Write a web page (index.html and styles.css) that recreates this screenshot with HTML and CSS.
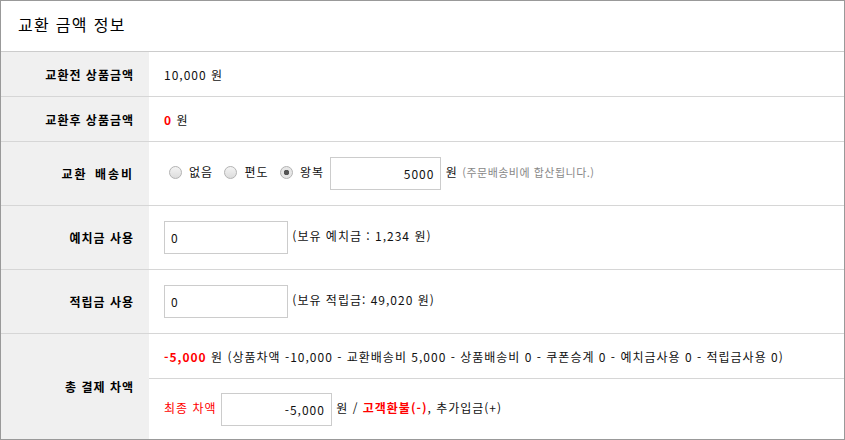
FILE: index.html
```html
<!DOCTYPE html>
<html lang="ko">
<head>
    <meta charset="UTF-8">
    <title>교환 금액 정보</title>
    <link rel="stylesheet" href="styles.css">
</head>
<body>
    <div class="box">
        <div class="box-title">교환 금액 정보</div>
        <table class="info">
            <tr class="row-s">
                <th>교환전 상품금액</th>
                <td>10,000 원</td>
            </tr>
            <tr class="row-s">
                <th>교환후 상품금액</th>
                <td><b class="red">0</b> 원</td>
            </tr>
            <tr class="row-m">
                <th class="wide">교환 배송비</th>
                <td>
                    <label class="opt"><input type="radio" name="ship">없음</label>
                    <label class="opt"><input type="radio" name="ship">편도</label>
                    <label class="opt"><input type="radio" name="ship" checked>왕복</label>
                    <input type="text" class="field num short" value="5000">
                    원 <span class="note">(주문배송비에 합산됩니다.)</span>
                </td>
            </tr>
            <tr class="row-m">
                <th>예치금 사용</th>
                <td><input type="text" class="field" value="0"> (보유 예치금 : 1,234 원)</td>
            </tr>
            <tr class="row-m">
                <th>적립금 사용</th>
                <td><input type="text" class="field" value="0"> (보유 적립금: 49,020 원)</td>
            </tr>
            <tr class="row-s">
                <th rowspan="2">총 결제 차액</th>
                <td><b class="red">-5,000</b> 원 (상품차액 -10,000 - 교환배송비 5,000 - 상품배송비 0 - 쿠폰승계 0 - 예치금사용 0 - 적립금사용 0)</td>
            </tr>
            <tr class="row-l">
                <td>
                    <span class="red">최종 차액</span>
                    <input type="text" class="field num short" value="-5,000">
                    원 / <b class="red">고객환불(-)</b>, 추가입금(+)
                </td>
            </tr>
        </table>
    </div>
</body>
</html>
```

FILE: styles.css
```css
body {
    margin: 0;
    font-family: "Noto Sans CJK KR", "Noto Sans", sans-serif;
    font-size: 12px;
    letter-spacing: 1px;
    color: #111;
}
.box {
    width: 845px;
    height: 440px;
    box-sizing: border-box;
    border: 1px solid #999;
    background: #fff;
    overflow: hidden;
}
.box-title {
    height: 50px;
    line-height: 46px;
    padding-left: 17px;
    font-size: 16px;
    letter-spacing: 1.3px;
    color: #000;
    border-bottom: 1px solid #ccc;
}
.info {
    width: 100%;
    border-collapse: collapse;
}
.info th {
    width: 133px;
    padding: 0 15px 0 0;
    background: #f0f0f0;
    text-align: right;
    font-weight: bold;
    color: #000;
    border-bottom: 1px solid #d6d6d6;
}
.info th.wide {
    letter-spacing: 2px;
    word-spacing: 2px;
}
.info td {
    padding: 0 0 0 15px;
    border-bottom: 1px solid #d6d6d6;
    white-space: nowrap;
}
.info tr:last-child td,
.info tr:last-child th {
    border-bottom: none;
}
.row-s td { height: 44px; }
.row-m td { height: 63px; }
.row-l td { height: 60px; }
.red {
    color: #f00;
}
.opt {
    margin-right: 2px;
}
.opt input {
    -webkit-appearance: none;
    appearance: none;
    width: 13px;
    height: 13px;
    margin: 0 7px 0 5px;
    vertical-align: -2px;
    border: 1px solid #b4b4b4;
    border-radius: 50%;
    background: linear-gradient(#f4f4f4, #dcdcdc);
    box-sizing: border-box;
}
.opt input:checked {
    background: radial-gradient(circle, #555 0 2.5px, #e6e6e6 3px);
}
.field {
    width: 124px;
    height: 33px;
    box-sizing: border-box;
    border: 1px solid #ccc;
    padding: 0 6px;
    font-family: inherit;
    font-size: 12px;
    letter-spacing: 1px;
    color: #111;
    vertical-align: middle;
}
.field.short {
    width: 111px;
}
.num {
    text-align: right;
}
.note {
    font-size: 11px;
    letter-spacing: 0.5px;
    color: #888;
}
```
